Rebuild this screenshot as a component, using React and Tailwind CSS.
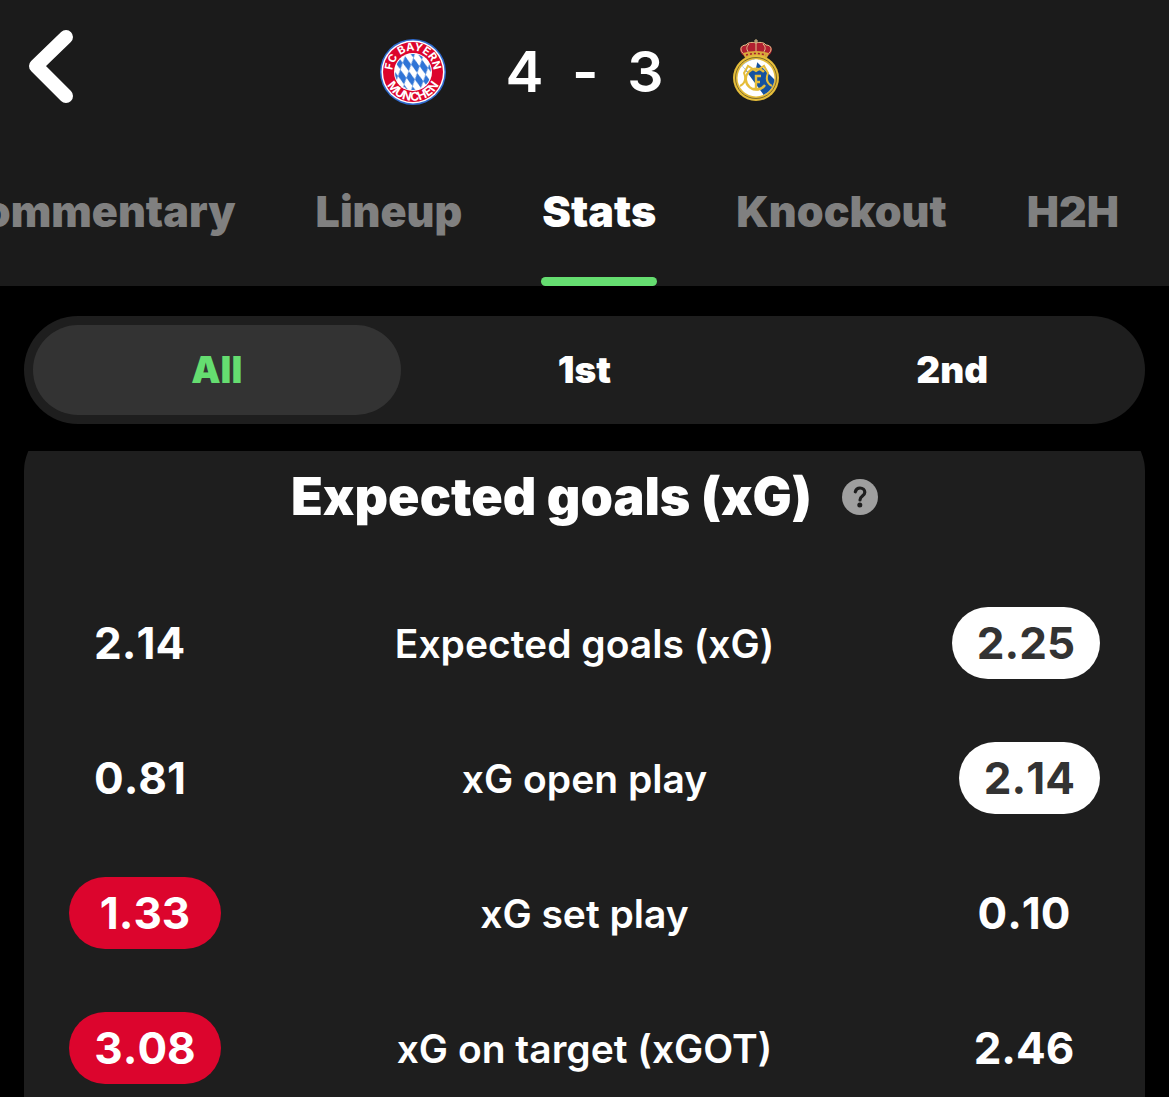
import React, { useState } from 'react';

const tabs = ['Commentary', 'Lineup', 'Stats', 'Knockout', 'H2H'];

const periods = ['All', '1st', '2nd'];

const stats = [
  { label: 'Expected goals (xG)', home: '2.14', away: '2.25', best: 'away' },
  { label: 'xG open play', home: '0.81', away: '2.14', best: 'away' },
  { label: 'xG set play', home: '1.33', away: '0.10', best: 'home' },
  { label: 'xG on target (xGOT)', home: '3.08', away: '2.46', best: 'home' },
];

const BayernCrest = () => (
  <svg viewBox="0 0 66 66" className="w-[66px] h-[66px]" role="img" aria-label="FC Bayern München">
    <defs>
      <pattern id="lozenges" width="8" height="15" patternUnits="userSpaceOnUse" patternTransform="translate(33 33) skewX(14) skewY(12)">
        <rect width="8" height="15" fill="#fff" />
        <path d="M4 0 8 7.5 4 15 0 7.5Z" fill="#2f74d6" />
      </pattern>
      <path id="crest-top" d="M12.700 35a20.500 20.500 0 1 1 40.600 0" />
      <path id="crest-bottom" d="M4.200 33a28.800 28.800 0 0 0 57.600 0" />
    </defs>
    <circle cx="33" cy="33" r="33" fill="#2f6bd0" />
    <circle cx="33" cy="33" r="31.5" fill="#fff" />
    <circle cx="33" cy="33" r="30" fill="#dc052d" />
    <circle cx="33" cy="33" r="19" fill="#fff" />
    <circle cx="33" cy="33" r="18" fill="url(#lozenges)" />
    <g fill="#fff" fontFamily="Inter, sans-serif" fontWeight="700" textAnchor="middle">
      <text fontSize="11">
        <textPath href="#crest-top" startOffset="50%">FC BAYERN</textPath>
      </text>
      <text fontSize="12">
        <textPath href="#crest-bottom" startOffset="50%">MÜNCHEN</textPath>
      </text>
    </g>
  </svg>
);

const MadridCrest = () => (
  <svg viewBox="0 0 66 66" className="w-[66px] h-[66px]" role="img" aria-label="Real Madrid">
    <defs>
      <clipPath id="shield">
        <circle cx="33" cy="39" r="18.5" />
      </clipPath>
    </defs>
    {/* crown */}
    <path d="M21 17c-6-4-5-11 2-11 2-3 7-4 10-2 3-2 8-1 10 2 7 0 8 7 2 11Z" fill="#b01f30" />
    <path
      d="M22 16c-6-4-5-10 1-10 2-3 7-3 10-2 3-1 8-1 10 2 6 0 7 6 1 10M27 15c-4-4-4-7-1-10M39 15c4-4 4-7 1-10M33 15V0M31 2h4"
      fill="none"
      stroke="#e0c48c"
      strokeWidth="1"
    />
    <path d="M20 14q13-4 26 0l-2 5q-11-3-22 0Z" fill="#d9a93c" />
    <path d="M23 16q10-3 20 0" fill="none" stroke="#a61c2b" strokeWidth="1.5" strokeDasharray="2 2" />
    {/* shield */}
    <circle cx="33" cy="39" r="23" fill="#e5bd3a" />
    <circle cx="33" cy="39" r="20.5" fill="none" stroke="#7c6a2c" strokeWidth="1" />
    <circle cx="33" cy="39" r="18.5" fill="#fff" />
    <path d="M18 25 28 17 58 47 42 61 40 55Z" fill="#1452a0" clipPath="url(#shield)" />
    <path d="M15 20h20l-2 9-8 4-4-4Z" fill="#fff" clipPath="url(#shield)" />
    <g fill="none" stroke="#e5bd3a" strokeWidth="2.400">
      <path d="M41 33a10.500 10.500 0 1 0 1 13" />
      <path d="M17 47c6-3 6-8 4-13l4-7 8 5 8-5 4 7c-2 5-2 10 4 13" strokeWidth="2" />
      <path d="M33 50V37h5M33 43h4M30 50h6" />
    </g>
  </svg>
);

const Header = ({ activeTab, onTabChange }) => (
  <header className="bg-[#1b1b1b]">
    <div className="grid grid-cols-[1fr_auto_1fr] items-center h-36">
      <button aria-label="Back" className="self-start justify-self-start h-33 pl-7">
        <svg viewBox="0 0 48 76" className="w-12 h-19" fill="none" stroke="#fff" strokeWidth="14" strokeLinecap="round" strokeLinejoin="round">
          <path d="M38 9 8 38l30 30" />
        </svg>
      </button>
      <div className="flex items-center gap-[59px]">
        <BayernCrest />
        <h1 className="text-[57px] font-semibold whitespace-pre [font-feature-settings:'calt'_0]">4  -  3</h1>
        <MadridCrest />
      </div>
    </div>
    <nav className="flex justify-end gap-20 h-[142px] pr-[50px] overflow-hidden">
      {tabs.map((tab) => {
        const isActive = tab === activeTab;
        return (
          <button
            key={tab}
            onClick={() => onTabChange(tab)}
            className={`relative shrink-0 pb-2 text-[43px] font-black ${isActive ? 'text-white' : 'text-[#808080]'}`}
          >
            {tab}
            {isActive && <span className="absolute -inset-x-px bottom-0 h-[9px] rounded-full bg-[#65dd70]" />}
          </button>
        );
      })}
    </nav>
  </header>
);

const valueStyles = {
  home: { best: 'min-w-[152px] bg-[#dc052d] text-white', plain: '' },
  away: { best: 'bg-white text-[#333333]', plain: 'min-w-[152px]' },
};

const StatValue = ({ value, side, isBest }) => (
  <span
    className={`inline-block px-[25px] rounded-full text-center text-[44px] leading-[72px] font-bold [font-kerning:none] ${
      isBest ? valueStyles[side].best : valueStyles[side].plain
    }`}
  >
    {value}
  </span>
);

const App = () => {
  const [activeTab, setActiveTab] = useState('Stats');
  const [period, setPeriod] = useState('All');

  return (
    <div className="h-screen flex flex-col overflow-hidden bg-black text-white font-['Inter',sans-serif]">
      <Header activeTab={activeTab} onTabChange={setActiveTab} />

      <div className="grid grid-cols-3 shrink-0 mx-6 mt-[30px] p-[9px] rounded-full bg-[#1e1e1e]">
        {periods.map((item) => (
          <button
            key={item}
            onClick={() => setPeriod(item)}
            className={`h-[90px] rounded-full text-[37px] font-black ${
              item === period ? 'bg-[#333333] text-[#65dd70]' : 'text-white'
            }`}
          >
            {item}
          </button>
        ))}
      </div>

      <main className="flex-1 min-h-0 mx-6 mt-[27px] overflow-hidden">
        <section className="-mt-7 pb-10 rounded-[48px] bg-[#1e1e1e]">
          <div className="flex items-center justify-center gap-[30px] pt-11 pb-12">
            <h2 className="text-[52px] leading-[60px] font-black">Expected goals (xG)</h2>
            <button aria-label="What is xG?">
              <svg viewBox="0 0 36 36" className="w-9 h-9">
                <circle cx="18" cy="18" r="18" fill="#9f9f9f" />
                <path d="M13.300 12.800c.6-2.600 2.400-3.800 4.700-3.800 2.800 0 4.800 1.600 4.800 4.200 0 4-4.800 3.800-4.800 7.800" fill="none" stroke="#1e1e1e" strokeWidth="3.200" strokeLinecap="round" />
                <circle cx="17.800" cy="26" r="2.500" fill="#1e1e1e" />
              </svg>
            </button>
          </div>
          <table className="w-full">
            <tbody>
              {stats.map((stat) => (
                <tr key={stat.label} className="h-[135px]">
                  <td className="w-1/4 pl-[45px] text-left">
                    <StatValue value={stat.home} side="home" isBest={stat.best === 'home'} />
                  </td>
                  <th scope="row" className="pt-1 text-[39px] font-semibold text-center">{stat.label}</th>
                  <td className="w-1/4 pr-[45px] text-right">
                    <StatValue value={stat.away} side="away" isBest={stat.best === 'away'} />
                  </td>
                </tr>
              ))}
            </tbody>
          </table>
        </section>
      </main>
    </div>
  );
};

export default App;
